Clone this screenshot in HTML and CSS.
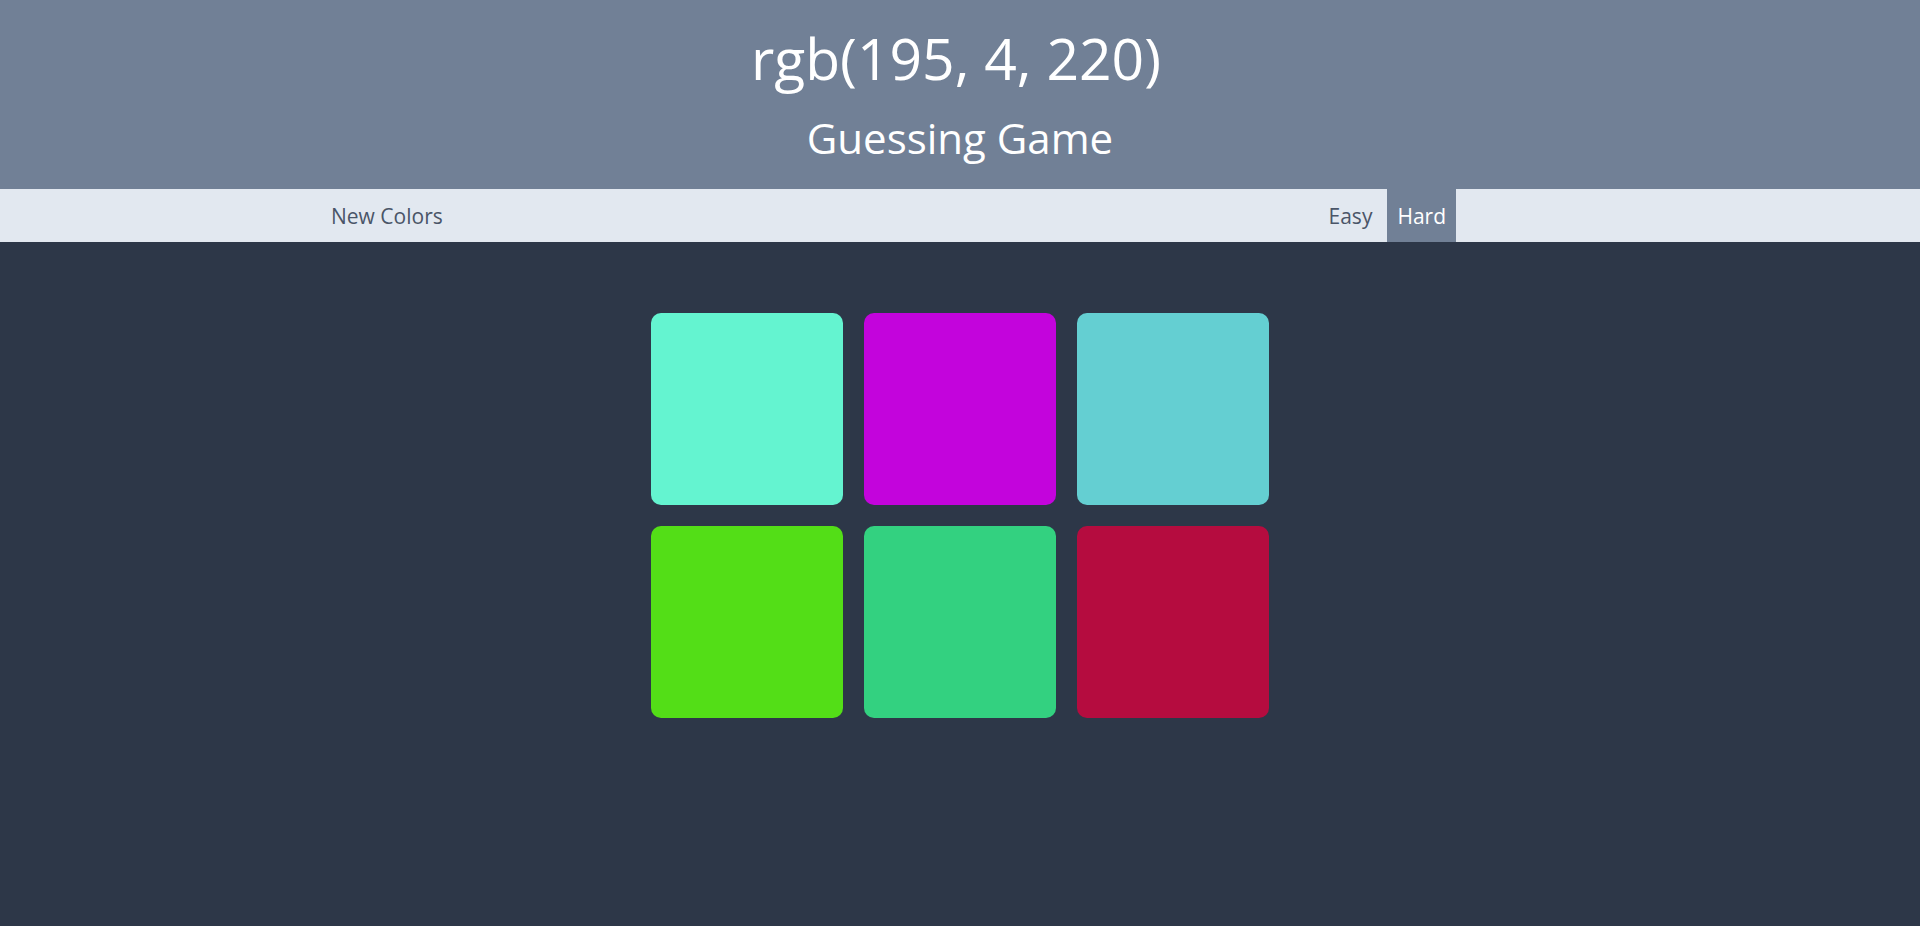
FILE: index.html
```html
<!DOCTYPE html>
<html lang="en">
<head>
<meta charset="utf-8">
<title>Color Guessing Game</title>
<link rel="stylesheet" href="styles.css">
</head>
<body>
<header class="header">
  <h1 class="title">rgb(195, 4, 220)</h1>
  <h2 class="subtitle">Guessing Game</h2>
</header>
<nav class="toolbar">
  <button class="btn">New Colors</button>
  <span class="message"></span>
  <div class="modes">
    <button class="btn">Easy</button>
    <button class="btn selected">Hard</button>
  </div>
</nav>
<main class="board">
  <div class="square" style="background: rgb(100, 244, 208)"></div>
  <div class="square" style="background: rgb(195, 4, 220)"></div>
  <div class="square" style="background: rgb(100, 207, 210)"></div>
  <div class="square" style="background: rgb(83, 222, 23)"></div>
  <div class="square" style="background: rgb(51, 209, 128)"></div>
  <div class="square" style="background: rgb(181, 12, 63)"></div>
</main>
</body>
</html>
```
FILE: styles.css
```css
* { box-sizing: border-box; }
html, body {
  margin: 0;
  padding: 0;
  background: #2d3748;
  font-family: "Open Sans", "Noto Sans", sans-serif;
}
body { overflow: hidden; }
.header {
  background: #718096;
  color: #ffffff;
  text-align: center;
  height: 189px;
  padding-top: 23px;
}
.title {
  margin: 0 0 0 -8px;
  font-weight: 400;
  font-size: 57px;
  line-height: 70px;
}
.subtitle {
  margin: 17px 0 0;
  font-weight: 400;
  font-size: 42px;
  line-height: 56px;
}
.toolbar {
  display: flex;
  align-items: stretch;
  height: 53px;
  background: #e2e8f0;
  padding-left: 320px;
  padding-right: 464px;
}
.message { flex: 1; }
.modes { display: flex; gap: 4px; }
.btn {
  border: none;
  background: transparent;
  font-family: inherit;
  font-size: 21px;
  color: #4a5568;
  padding: 0 11px;
  margin: 0;
  height: 53px;
  cursor: pointer;
}
.btn.selected {
  background: #718096;
  color: #ffffff;
  padding: 0 10px;
}
.board {
  width: 640px;
  margin: 60px auto 0;
  display: flex;
  flex-wrap: wrap;
}
.square {
  width: 30%;
  padding-bottom: 30%;
  margin: 1.66%;
  border-radius: 10px;
}
```
